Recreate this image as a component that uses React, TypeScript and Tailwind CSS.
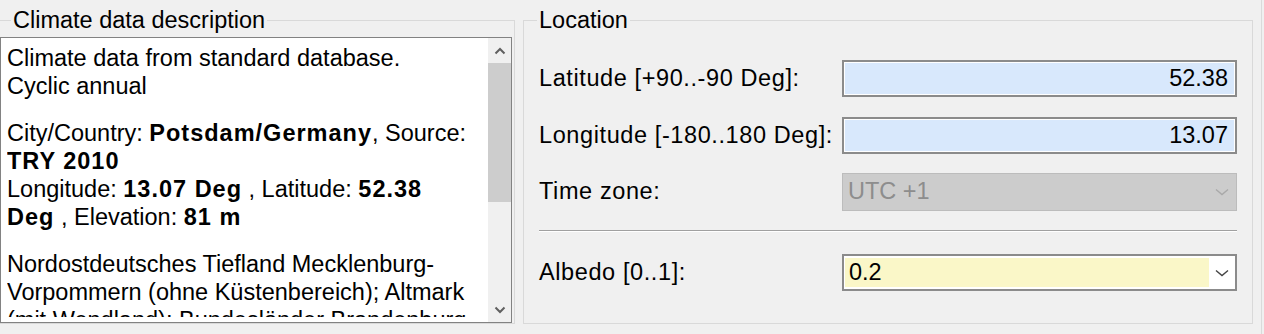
import React from "react";

function ScrollChevron({ down }: { down?: boolean }) {
  return (
    <svg width="12" height="8" viewBox="0 0 12 8">
      <path
        d={down ? "M1.5 1.5 6 6l4.5-4.5" : "M1.5 6.5 6 2l4.5 4.5"}
        fill="none"
        stroke="#606060"
        strokeWidth="2"
      />
    </svg>
  );
}

function ComboChevron({ color }: { color: string }) {
  return (
    <svg width="14" height="8" viewBox="0 0 14 8">
      <path d="M1 1.5 7 6.5l6-5" fill="none" stroke={color} strokeWidth="1.4" />
    </svg>
  );
}

function Row({ label, children }: { label: string; children: React.ReactNode }) {
  return (
    <div className="flex items-center">
      <div className="w-[303px] whitespace-nowrap tracking-[0.6px]">{label}</div>
      <div className="w-[395px]">{children}</div>
    </div>
  );
}

function NumberBox({ value }: { value: string }) {
  return (
    <div className="flex h-[37px] items-center justify-end border-2 border-[#8b8b8b] bg-[#d8e8fc] pr-[7px] shadow-[inset_0_0_0_1px_#ffffff]">
      {value}
    </div>
  );
}

function B({ children }: { children: React.ReactNode }) {
  return <b className="tracking-[1px]">{children}</b>;
}

export default function App() {
  return (
    <div className="flex h-[334px] w-[1264px] overflow-hidden bg-[#f0f0f0] font-['Liberation_Sans',Arial,sans-serif] text-[23.5px] text-black">
      {/* Climate data description */}
      <fieldset className="ml-[-1px] mt-[6px] h-[318px] w-[516px] shrink-0 border border-[#d9d9d9]">
        <legend className="ml-[11px] px-[2px] leading-[29px]">Climate data description</legend>
        <div className="mt-[2px] flex h-[286px] w-[512px] border border-[#828282] bg-white">
          <div className="flex-1 pb-[5px] pl-[6px] pt-[7px]">
            <div className="h-full overflow-hidden whitespace-nowrap leading-[27.7px]">
              <p>Climate data from standard database.</p>
              <p>Cyclic annual</p>
              <p className="mt-[20px]">
                City/Country: <B>Potsdam/Germany</B>, Source:
              </p>
              <p>
                <B>TRY 2010</B>
              </p>
              <p>
                Longitude: <B>13.07 Deg</B> , Latitude: <B>52.38</B>
              </p>
              <p>
                <B>Deg</B> , Elevation: <B>81 m</B>
              </p>
              <p className="mt-[20px]">Nordostdeutsches Tiefland Mecklenburg-</p>
              <p>Vorpommern (ohne Küstenbereich); Altmark</p>
              <p>(mit Wendland); Bundesländer Brandenburg</p>
            </div>
          </div>
          <div className="flex w-[23px] flex-col bg-[#f0f0f0]">
            <div className="flex h-[25px] items-center justify-center">
              <ScrollChevron />
            </div>
            <div className="h-[139px] bg-[#cdcdcd]" />
            <div className="flex-1" />
            <div className="flex h-[24px] items-center justify-center">
              <ScrollChevron down />
            </div>
          </div>
        </div>
      </fieldset>

      {/* Location */}
      <fieldset className="ml-[8px] mt-[6px] h-[318px] w-[730px] shrink-0 border border-[#d9d9d9] px-[15px]">
        <legend className="ml-[-2px] px-[2px] leading-[29px]">Location</legend>
        <div className="pt-[25px]">
          <Row label="Latitude [+90..-90 Deg]:">
            <NumberBox value="52.38" />
          </Row>
          <div className="mt-[20px]">
            <Row label="Longitude [-180..180 Deg]:">
              <NumberBox value="13.07" />
            </Row>
          </div>
          <div className="mt-[19px]">
            <Row label="Time zone:">
              <div className="flex h-[38px] items-center justify-between border border-[#bcbcbc] bg-[#cccccc] pl-[5px] pr-[7px] text-[#8d8d8d]">
                <span>UTC +1</span>
                <ComboChevron color="#a9a9a9" />
              </div>
            </Row>
          </div>
          <div className="mt-[19px] h-[2px] border-t border-[#a0a0a0] bg-white" />
          <div className="mt-[22px]">
            <Row label="Albedo [0..1]:">
              <div className="flex h-[37px] items-stretch border-2 border-[#8b8b8b] bg-white">
                <div className="my-[2px] ml-px flex flex-1 items-center bg-[#faf7c8] pl-[4px]">0.2</div>
                <div className="flex w-[26px] items-center justify-center">
                  <ComboChevron color="#444444" />
                </div>
              </div>
            </Row>
          </div>
        </div>
      </fieldset>

      <div className="ml-[8px] h-full w-px bg-[#dadada]" />
      <div className="flex-1" />
    </div>
  );
}
